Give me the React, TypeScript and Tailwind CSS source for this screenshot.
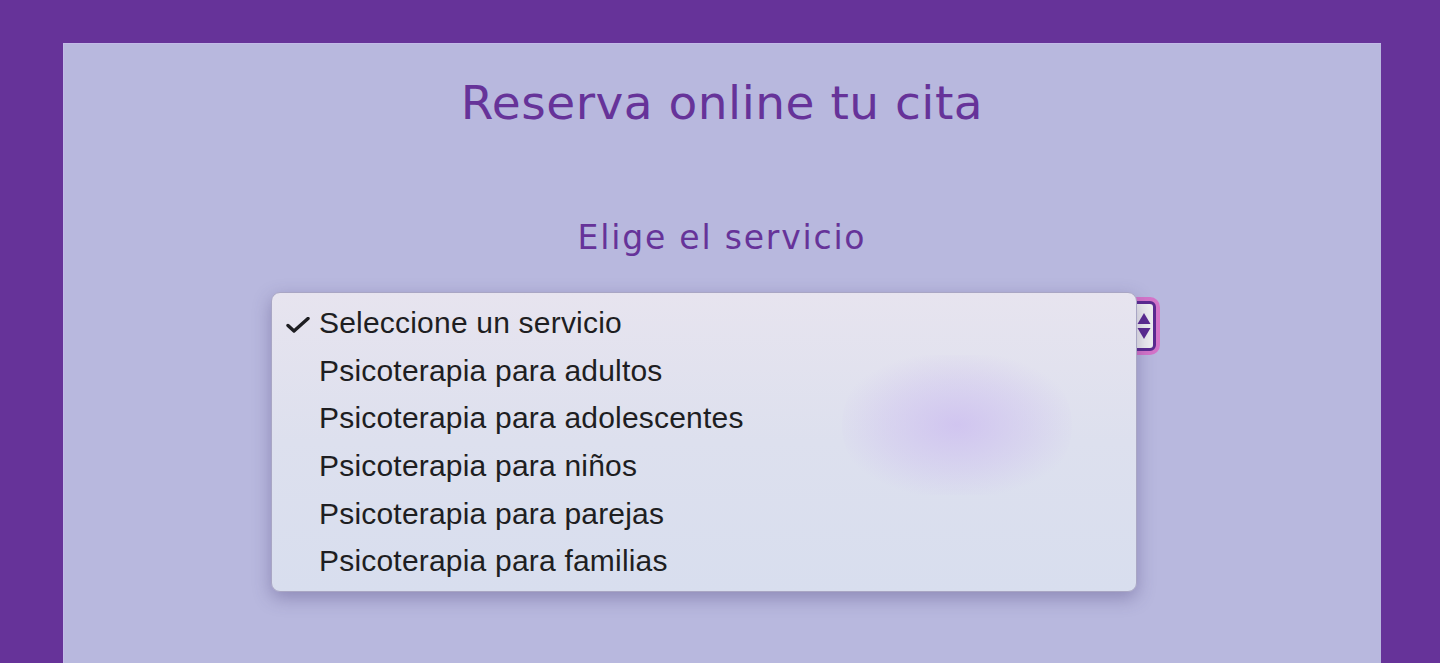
const services = [
  "Seleccione un servicio",
  "Psicoterapia para adultos",
  "Psicoterapia para adolescentes",
  "Psicoterapia para niños",
  "Psicoterapia para parejas",
  "Psicoterapia para familias",
];

function Stepper() {
  return (
    <svg width="14" height="34" viewBox="0 0 14 34" className="text-[#5b2a91]">
      <path d="M7 4 L13.5 15 L0.5 15 Z" fill="currentColor" />
      <path d="M7 30 L13.5 19 L0.5 19 Z" fill="currentColor" />
    </svg>
  );
}

function Check() {
  return (
    <svg width="24" height="16" viewBox="0 0 24 16" className="absolute left-[14px] top-[18px]">
      <path
        d="M2 8.5 L8 14 L22 1.5"
        fill="none"
        stroke="#1e1e22"
        strokeWidth="3.4"
        strokeLinecap="round"
        strokeLinejoin="round"
      />
    </svg>
  );
}

export default function App() {
  return (
    <div className="min-h-screen bg-[#663399] pl-[63px] pr-[59px] pt-[43px] font-['DejaVu_Sans',sans-serif]">
      <div className="relative h-[620px] bg-[#b8b8de] shadow-[inset_1px_1px_0_#c3bbe8] flex flex-col items-center">
        <h1 className="mt-[30px] text-[47px] leading-[60px] text-[#663399] tracking-[0.5px]">
          Reserva online tu cita
        </h1>
        <h2 className="mt-[85px] text-[33px] leading-[40px] text-[#663399] tracking-[1.8px]">
          Elige el servicio
        </h2>

        {/* focused select behind the open list */}
        <div className="mt-[43px] w-[868px] h-[50px] rounded-[6px] border-[3px] border-[#5b2a91] bg-[#eeeef0] shadow-[0_0_0_4px_#d474c9] flex items-center justify-end pr-[2px]">
          <Stepper />
        </div>

        {/* native option list */}
        <div className="absolute left-[208px] top-[249px] w-[866px] h-[300px] rounded-[9px] border border-[#a9a6c4] overflow-hidden shadow-[0_6px_18px_rgba(60,50,110,0.35)] bg-[linear-gradient(180deg,#e7e4ef_0%,#dde0ee_50%,#d8deee_100%)] font-['Liberation_Sans',Arial,sans-serif]">
          <div className="absolute left-[570px] top-[62px] w-[230px] h-[140px] rounded-full bg-[radial-gradient(ellipse_at_center,rgba(205,190,240,0.8)_0%,rgba(205,190,240,0.35)_45%,rgba(205,190,240,0)_75%)]" />
          <ul className="relative pt-[6px]">
            {services.map((s, i) => (
              <li
                key={s}
                className="relative h-[47.6px] flex items-center pl-[47px] text-[30px] tracking-[0.2px] text-[#1e1e22]"
              >
                {i === 0 && <Check />}
                {s}
              </li>
            ))}
          </ul>
        </div>
      </div>
    </div>
  );
}
